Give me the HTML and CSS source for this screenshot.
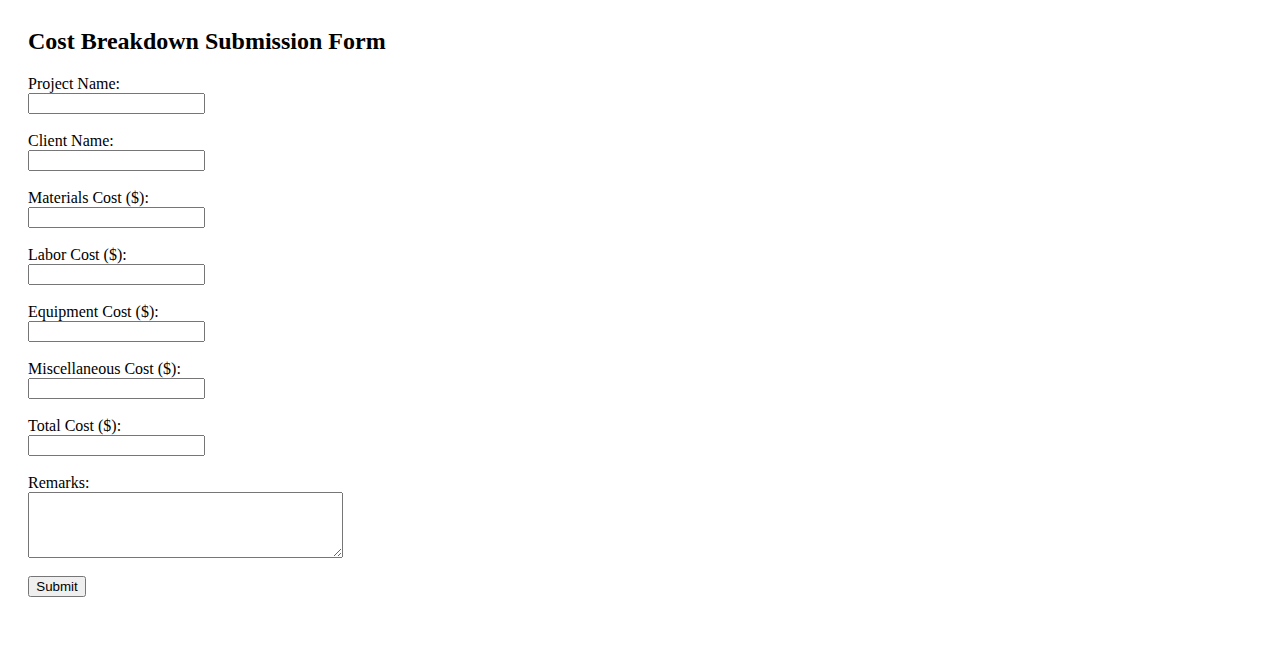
FILE: index.html
```html
<!DOCTYPE html>
<html lang="en">
<head>
<meta charset="utf-8">
<title>Cost Breakdown Submission Form</title>
<link rel="stylesheet" href="styles.css">
</head>
<body>
<div class="page">
  <h2 class="title">Cost Breakdown Submission Form</h2>
  <form class="cost-form">
    <div class="form-group">
      <label class="field-label" for="project">Project Name:</label>
      <input class="text-input" type="text" id="project">
    </div>
    <div class="form-group">
      <label class="field-label" for="client">Client Name:</label>
      <input class="text-input" type="text" id="client">
    </div>
    <div class="form-group">
      <label class="field-label" for="materials">Materials Cost ($):</label>
      <input class="text-input" type="text" id="materials">
    </div>
    <div class="form-group">
      <label class="field-label" for="labor">Labor Cost ($):</label>
      <input class="text-input" type="text" id="labor">
    </div>
    <div class="form-group">
      <label class="field-label" for="equipment">Equipment Cost ($):</label>
      <input class="text-input" type="text" id="equipment">
    </div>
    <div class="form-group">
      <label class="field-label" for="misc">Miscellaneous Cost ($):</label>
      <input class="text-input" type="text" id="misc">
    </div>
    <div class="form-group">
      <label class="field-label" for="total">Total Cost ($):</label>
      <input class="text-input" type="text" id="total">
    </div>
    <div class="form-group form-group-remarks">
      <label class="field-label" for="remarks">Remarks:</label>
      <textarea class="remarks" id="remarks"></textarea>
    </div>
    <button class="submit-btn" type="submit">Submit</button>
  </form>
</div>
</body>
</html>
```

FILE: styles.css
```css
body {
  margin: 8px;
  font-family: "Liberation Serif", "Times New Roman", serif;
  font-size: 16px;
  color: #000;
  background: #fff;
}

.page {
  padding: 20px;
}

.title {
  margin: 0 0 20px 0;
  font-size: 24px;
  font-weight: bold;
}

.cost-form {
  margin: 0;
}

.form-group {
  margin-bottom: 18px;
}

.form-group-remarks {
  margin-bottom: 13.5px;
}

.field-label {
  display: block;
}

.text-input {
  box-sizing: border-box;
  width: 177px;
  height: 21px;
  margin: 0;
  font-family: "Liberation Sans", Arial, sans-serif;
  font-size: 13.333px;
}

.remarks {
  box-sizing: border-box;
  width: 315px;
  height: 66px;
  margin: 0;
  font-family: "Liberation Mono", monospace;
  font-size: 13.333px;
  vertical-align: baseline;
}

.submit-btn {
  box-sizing: border-box;
  width: 58px;
  height: 21px;
  margin: 0;
  font-family: "Liberation Sans", Arial, sans-serif;
  font-size: 13.333px;
}
```
